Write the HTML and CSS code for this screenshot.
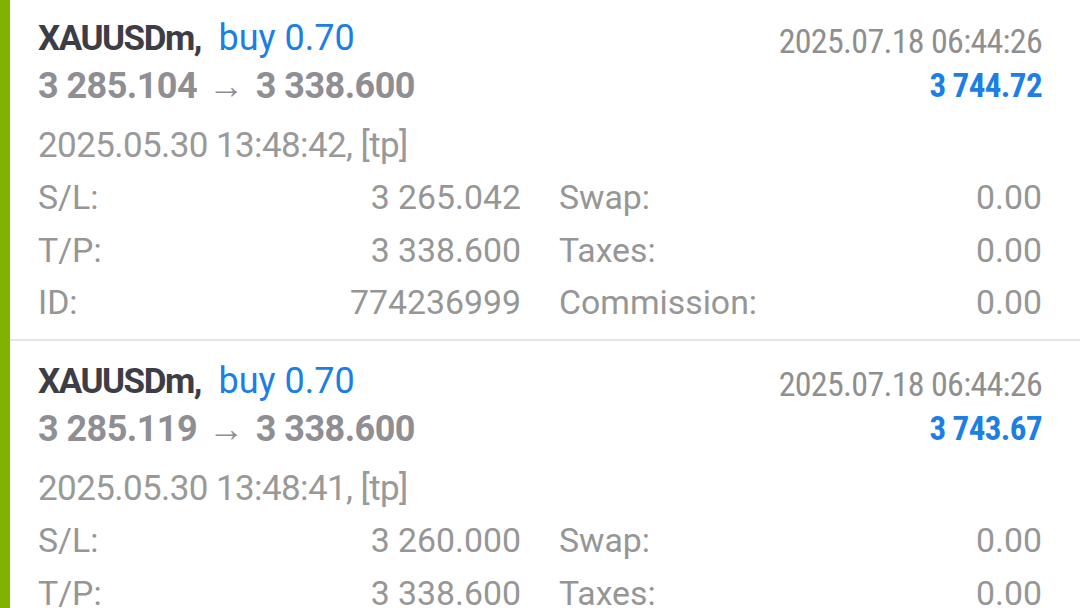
FILE: index.html
```html
<!DOCTYPE html>
<html lang="en">
<head>
    <meta charset="UTF-8">
    <meta name="viewport" content="width=device-width, initial-scale=1.0">
    <title>History - Positions</title>
    <link rel="stylesheet" href="styles.css">
</head>
<body>
    <div class="deals">
        <!-- Position 1 -->
        <div class="deal">
            <div class="deal-head">
                <div class="deal-main">
                    <div class="deal-title"><span class="symbol">XAUUSDm,</span> <span class="type">buy 0.70</span></div>
                    <div class="deal-prices">3 285.104 <span class="arrow">&rarr;</span> 3 338.600</div>
                </div>
                <div class="deal-side">
                    <div class="deal-time">2025.07.18 06:44:26</div>
                    <div class="deal-profit">3 744.72</div>
                </div>
            </div>
            <div class="deal-open">2025.05.30 13:48:42, [tp]</div>
            <div class="deal-grid">
                <div class="field"><span>S/L:</span><span>3 265.042</span></div>
                <div class="field"><span>Swap:</span><span>0.00</span></div>
                <div class="field"><span>T/P:</span><span>3 338.600</span></div>
                <div class="field"><span>Taxes:</span><span>0.00</span></div>
                <div class="field"><span>ID:</span><span>774236999</span></div>
                <div class="field"><span>Commission:</span><span>0.00</span></div>
            </div>
        </div>

        <!-- Position 2 -->
        <div class="deal">
            <div class="deal-head">
                <div class="deal-main">
                    <div class="deal-title"><span class="symbol">XAUUSDm,</span> <span class="type">buy 0.70</span></div>
                    <div class="deal-prices">3 285.119 <span class="arrow">&rarr;</span> 3 338.600</div>
                </div>
                <div class="deal-side">
                    <div class="deal-time">2025.07.18 06:44:26</div>
                    <div class="deal-profit">3 743.67</div>
                </div>
            </div>
            <div class="deal-open">2025.05.30 13:48:41, [tp]</div>
            <div class="deal-grid">
                <div class="field"><span>S/L:</span><span>3 260.000</span></div>
                <div class="field"><span>Swap:</span><span>0.00</span></div>
                <div class="field"><span>T/P:</span><span>3 338.600</span></div>
                <div class="field"><span>Taxes:</span><span>0.00</span></div>
                <div class="field"><span>ID:</span><span>774236998</span></div>
                <div class="field"><span>Commission:</span><span>0.00</span></div>
            </div>
        </div>
    </div>
</body>
</html>
```

FILE: styles.css
```css
body {
    font-family: Roboto, "Noto Sans", Arial, sans-serif;
    margin: 0;
    padding: 0;
    background: #fff;
    overflow: hidden;
}
.deals {
    border-left: 10px solid #7fb300; /* green bar for buy positions */
    margin-top: -2px; /* list is scrolled a little */
}
.deal {
    padding: 17px 38px 9.5px 28px;
    border-bottom: 2px solid #e5e5e5;
}
.deal-head {
    display: flex;
    justify-content: space-between;
}
.deal-title {
    font-size: 35px;
    line-height: 46px;
}
.symbol {
    font-weight: bold;
    letter-spacing: -1.5px;
    color: #3d3d45;
}
.type {
    margin-left: 9px;
    font-size: 36px;
    color: #1c7fe3;
}
.deal-prices {
    font-size: 36px;
    line-height: 48px;
    font-weight: bold;
    letter-spacing: -0.55px;
    color: #8e8e93;
}
.arrow {
    margin: 0 3px;
    font-weight: 500;
    letter-spacing: 0;
}
.deal-side {
    text-align: right;
    padding-top: 3px;
}
.deal-time {
    font-size: 34px;
    line-height: 46px;
    font-stretch: 75%;
    letter-spacing: -0.7px;
    color: #8f8f8f;
}
.deal-profit {
    font-size: 33px;
    line-height: 44px;
    font-weight: bold;
    font-stretch: 75%;
    letter-spacing: -0.6px;
    color: #1c7fe3;
}
.deal-open {
    margin-top: 12px;
    font-size: 35px;
    line-height: 48px;
    letter-spacing: -0.6px;
    color: #999;
}
.deal-grid {
    margin-top: 2px;
    display: grid;
    grid-template-columns: 1fr 1fr;
    column-gap: 38px;
}
.field {
    display: flex;
    justify-content: space-between;
    font-size: 33.8px;
    line-height: 52.5px;
    color: #969696;
}
```
